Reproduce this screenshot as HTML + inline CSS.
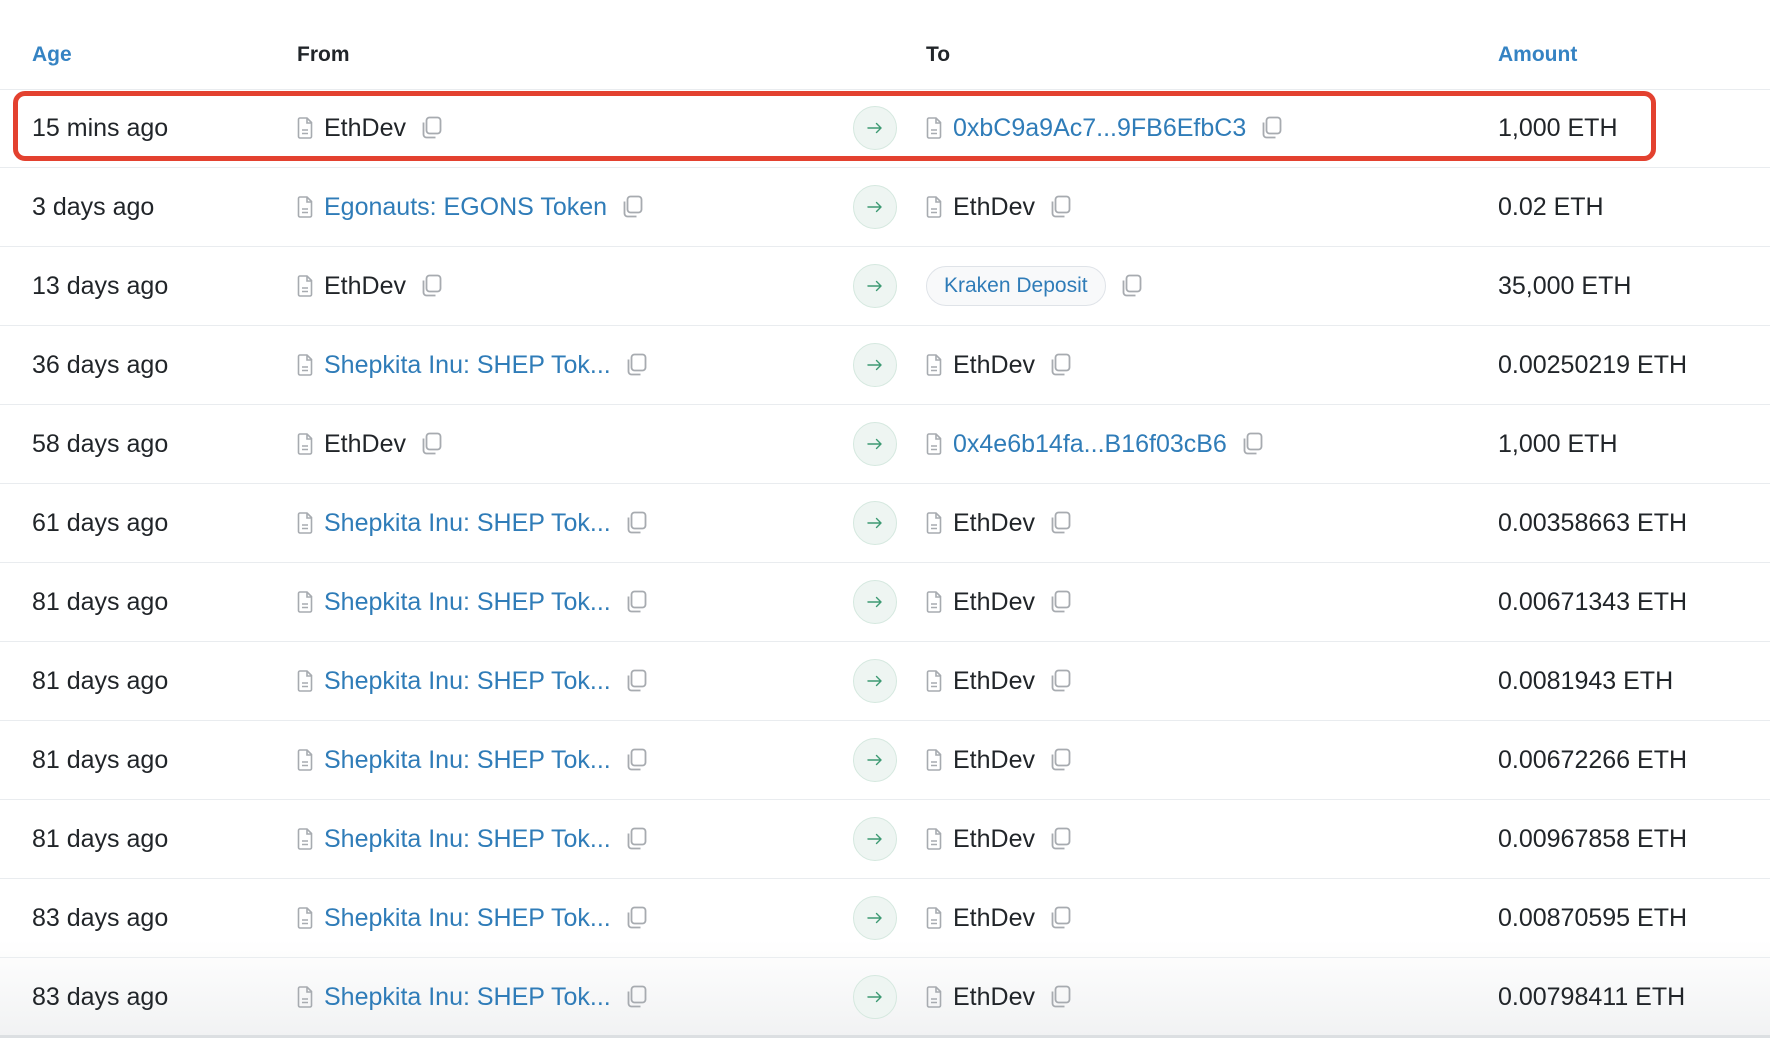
<!DOCTYPE html>
<html><head><meta charset="utf-8"><style>
body{margin:0;width:1770px;height:1038px;background:#fff;font-family:"Liberation Sans",sans-serif;color:#212529;position:relative;overflow:hidden}
.h{position:absolute;top:43px;font-size:21px;font-weight:bold}
.b{color:#3583c3}
.hl{position:absolute;top:89px;left:0;width:1770px;height:1px;background:#e9ecef}
.row{position:absolute;left:0;width:1770px;height:79px;border-bottom:1px solid #e9ecef;box-sizing:border-box;font-size:25px}
.row>div{position:absolute;top:0;height:78px;display:flex;align-items:center;white-space:nowrap}
.age{left:32px}.from{left:297px}.to{left:926px}.amt{left:1498px}
.arr{left:853px}
.circ{width:42px;height:42px;border-radius:50%;background:#eef5f2;border:1px solid #d5e8df;display:flex;align-items:center;justify-content:center}
.doc{margin-right:11px;display:block}
.cp{margin-left:13px;display:block}
a{color:#2f7cb8;text-decoration:none}
.pill{border:1px solid #dfe3e8;background:#f8f9fa;border-radius:20px;padding:7px 17px;font-size:21px;color:#2f7cb8}
.red{position:absolute;left:13px;top:91px;width:1643px;height:70px;border:5px solid #e3412f;border-radius:12px;box-sizing:border-box}
.fade{position:absolute;left:0;top:940px;width:1770px;height:96px;background:linear-gradient(#fff0,#f1f2f3)}
.bl{position:absolute;left:0;top:1035px;width:1770px;height:3px;background:#dcdfe2}
</style></head><body>
<svg width="0" height="0" style="position:absolute"><defs>
<symbol id="d" viewBox="0 0 16 22"><path d="M1.5 2.5a1.5 1.5 0 0 1 1.5-1.5h7l4.5 4.5v14a1.5 1.5 0 0 1-1.5 1.5H3a1.5 1.5 0 0 1-1.5-1.5z" fill="none" stroke="#a7abb0" stroke-width="1.6"/><path d="M10 1v5h4.5" fill="none" stroke="#a7abb0" stroke-width="1.6"/><path d="M5 13h6M5 16.5h6" stroke="#a7abb0" stroke-width="1.6"/></symbol>
<symbol id="c" viewBox="0 0 24 24"><rect x="7.5" y="1.5" width="14" height="16" rx="3" fill="none" stroke="#a7abb0" stroke-width="1.8"/><path d="M4.5 6.5v12a3 3 0 0 0 3 3h9" fill="none" stroke="#a7abb0" stroke-width="1.8"/></symbol>
<symbol id="a" viewBox="0 0 20 20"><path d="M3 10h13M11.5 5.5l4.5 4.5-4.5 4.5" fill="none" stroke="#3d9a73" stroke-width="1.4" stroke-linecap="round" stroke-linejoin="round"/></symbol>
</defs></svg>
<div class="h b" style="left:32px">Age</div>
<div class="h" style="left:297px">From</div>
<div class="h" style="left:926px">To</div>
<div class="h b" style="left:1498px">Amount</div>
<div class="hl"></div>

<div class="row" style="top:89px"><div class="age">15 mins ago</div><div class="from"><svg class="doc" width="16" height="22"><use href="#d"/></svg>EthDev<svg class="cp" width="24" height="24"><use href="#c"/></svg></div><div class="arr"><div class="circ"><svg width="20" height="20"><use href="#a"/></svg></div></div><div class="to"><svg class="doc" width="16" height="22"><use href="#d"/></svg><a>0xbC9a9Ac7...9FB6EfbC3</a><svg class="cp" width="24" height="24"><use href="#c"/></svg></div><div class="amt">1,000 ETH</div></div>

<div class="row" style="top:168px"><div class="age">3 days ago</div><div class="from"><svg class="doc" width="16" height="22"><use href="#d"/></svg><a>Egonauts: EGONS Token</a><svg class="cp" width="24" height="24"><use href="#c"/></svg></div><div class="arr"><div class="circ"><svg width="20" height="20"><use href="#a"/></svg></div></div><div class="to"><svg class="doc" width="16" height="22"><use href="#d"/></svg>EthDev<svg class="cp" width="24" height="24"><use href="#c"/></svg></div><div class="amt">0.02 ETH</div></div>

<div class="row" style="top:247px"><div class="age">13 days ago</div><div class="from"><svg class="doc" width="16" height="22"><use href="#d"/></svg>EthDev<svg class="cp" width="24" height="24"><use href="#c"/></svg></div><div class="arr"><div class="circ"><svg width="20" height="20"><use href="#a"/></svg></div></div><div class="to"><span class="pill">Kraken Deposit</span><svg class="cp" width="24" height="24"><use href="#c"/></svg></div><div class="amt">35,000 ETH</div></div>

<div class="row" style="top:326px"><div class="age">36 days ago</div><div class="from"><svg class="doc" width="16" height="22"><use href="#d"/></svg><a>Shepkita Inu: SHEP Tok...</a><svg class="cp" width="24" height="24"><use href="#c"/></svg></div><div class="arr"><div class="circ"><svg width="20" height="20"><use href="#a"/></svg></div></div><div class="to"><svg class="doc" width="16" height="22"><use href="#d"/></svg>EthDev<svg class="cp" width="24" height="24"><use href="#c"/></svg></div><div class="amt">0.00250219 ETH</div></div>

<div class="row" style="top:405px"><div class="age">58 days ago</div><div class="from"><svg class="doc" width="16" height="22"><use href="#d"/></svg>EthDev<svg class="cp" width="24" height="24"><use href="#c"/></svg></div><div class="arr"><div class="circ"><svg width="20" height="20"><use href="#a"/></svg></div></div><div class="to"><svg class="doc" width="16" height="22"><use href="#d"/></svg><a>0x4e6b14fa...B16f03cB6</a><svg class="cp" width="24" height="24"><use href="#c"/></svg></div><div class="amt">1,000 ETH</div></div>

<div class="row" style="top:484px"><div class="age">61 days ago</div><div class="from"><svg class="doc" width="16" height="22"><use href="#d"/></svg><a>Shepkita Inu: SHEP Tok...</a><svg class="cp" width="24" height="24"><use href="#c"/></svg></div><div class="arr"><div class="circ"><svg width="20" height="20"><use href="#a"/></svg></div></div><div class="to"><svg class="doc" width="16" height="22"><use href="#d"/></svg>EthDev<svg class="cp" width="24" height="24"><use href="#c"/></svg></div><div class="amt">0.00358663 ETH</div></div>

<div class="row" style="top:563px"><div class="age">81 days ago</div><div class="from"><svg class="doc" width="16" height="22"><use href="#d"/></svg><a>Shepkita Inu: SHEP Tok...</a><svg class="cp" width="24" height="24"><use href="#c"/></svg></div><div class="arr"><div class="circ"><svg width="20" height="20"><use href="#a"/></svg></div></div><div class="to"><svg class="doc" width="16" height="22"><use href="#d"/></svg>EthDev<svg class="cp" width="24" height="24"><use href="#c"/></svg></div><div class="amt">0.00671343 ETH</div></div>

<div class="row" style="top:642px"><div class="age">81 days ago</div><div class="from"><svg class="doc" width="16" height="22"><use href="#d"/></svg><a>Shepkita Inu: SHEP Tok...</a><svg class="cp" width="24" height="24"><use href="#c"/></svg></div><div class="arr"><div class="circ"><svg width="20" height="20"><use href="#a"/></svg></div></div><div class="to"><svg class="doc" width="16" height="22"><use href="#d"/></svg>EthDev<svg class="cp" width="24" height="24"><use href="#c"/></svg></div><div class="amt">0.0081943 ETH</div></div>

<div class="row" style="top:721px"><div class="age">81 days ago</div><div class="from"><svg class="doc" width="16" height="22"><use href="#d"/></svg><a>Shepkita Inu: SHEP Tok...</a><svg class="cp" width="24" height="24"><use href="#c"/></svg></div><div class="arr"><div class="circ"><svg width="20" height="20"><use href="#a"/></svg></div></div><div class="to"><svg class="doc" width="16" height="22"><use href="#d"/></svg>EthDev<svg class="cp" width="24" height="24"><use href="#c"/></svg></div><div class="amt">0.00672266 ETH</div></div>

<div class="row" style="top:800px"><div class="age">81 days ago</div><div class="from"><svg class="doc" width="16" height="22"><use href="#d"/></svg><a>Shepkita Inu: SHEP Tok...</a><svg class="cp" width="24" height="24"><use href="#c"/></svg></div><div class="arr"><div class="circ"><svg width="20" height="20"><use href="#a"/></svg></div></div><div class="to"><svg class="doc" width="16" height="22"><use href="#d"/></svg>EthDev<svg class="cp" width="24" height="24"><use href="#c"/></svg></div><div class="amt">0.00967858 ETH</div></div>

<div class="row" style="top:879px"><div class="age">83 days ago</div><div class="from"><svg class="doc" width="16" height="22"><use href="#d"/></svg><a>Shepkita Inu: SHEP Tok...</a><svg class="cp" width="24" height="24"><use href="#c"/></svg></div><div class="arr"><div class="circ"><svg width="20" height="20"><use href="#a"/></svg></div></div><div class="to"><svg class="doc" width="16" height="22"><use href="#d"/></svg>EthDev<svg class="cp" width="24" height="24"><use href="#c"/></svg></div><div class="amt">0.00870595 ETH</div></div>

<div class="fade"></div>
<div class="row" style="top:958px;border-bottom:none"><div class="age">83 days ago</div><div class="from"><svg class="doc" width="16" height="22"><use href="#d"/></svg><a>Shepkita Inu: SHEP Tok...</a><svg class="cp" width="24" height="24"><use href="#c"/></svg></div><div class="arr"><div class="circ"><svg width="20" height="20"><use href="#a"/></svg></div></div><div class="to"><svg class="doc" width="16" height="22"><use href="#d"/></svg>EthDev<svg class="cp" width="24" height="24"><use href="#c"/></svg></div><div class="amt">0.00798411 ETH</div></div>
<div class="bl"></div>
<div class="red"></div>
</body></html>
